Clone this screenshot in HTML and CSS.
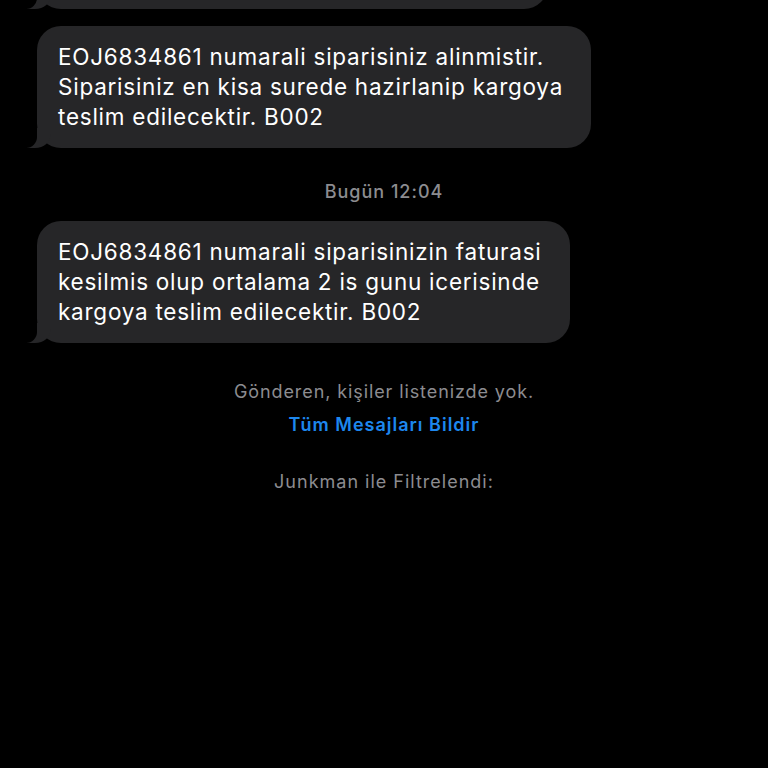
FILE: index.html
```html
<!DOCTYPE html>
<html lang="tr">
<head>
<meta charset="utf-8">
<title>Mesajlar</title>
<link rel="stylesheet" href="styles.css">
</head>
<body>
<main class="thread">
  <div class="bubble bubble-cut"></div>

  <div class="bubble b2">EOJ6834861 numarali siparisiniz alinmistir.<br>Siparisiniz en kisa surede hazirlanip kargoya<br>teslim edilecektir. B002</div>

  <div class="stamp">Bugün 12:04</div>

  <div class="bubble b3">EOJ6834861 numarali siparisinizin faturasi<br>kesilmis olup ortalama 2 is gunu icerisinde<br>kargoya teslim edilecektir. B002</div>

  <div class="footer">
    <div class="note">Gönderen, kişiler listenizde yok.</div>
    <div class="link">Tüm Mesajları Bildir</div>
    <div class="filter">Junkman ile Filtrelendi:</div>
  </div>
</main>
</body>
</html>
```

FILE: styles.css
```css
html, body {
  margin: 0;
  padding: 0;
  background: #000;
  height: 100%;
}

body {
  font-family: Inter, "Noto Sans", "Liberation Sans", sans-serif;
  color: #fff;
  overflow: hidden;
}

.thread {
  display: flex;
  flex-direction: column;
  align-items: flex-start;
  padding-left: 37px;
}

.bubble {
  position: relative;
  background: #262628;
  border-radius: 24px;
  padding: 16px 28px 16px 21px;
  font-size: 22.5px;
  line-height: 30px;
  letter-spacing: 0.75px;
  white-space: nowrap;
}

.bubble::before {
  content: "";
  position: absolute;
  bottom: 0;
  left: -10px;
  width: 24px;
  height: 20px;
  background: #262628;
  border-bottom-right-radius: 16px 14px;
}

.bubble::after {
  content: "";
  position: absolute;
  bottom: 0;
  left: -30px;
  width: 30px;
  height: 22px;
  background: #000;
  border-bottom-right-radius: 11px;
}

.bubble-cut {
  width: 511px;
  height: 60px;
  margin-top: -51px;
  padding: 0;
  border-radius: 0 0 24px 24px;
}

.b2 {
  margin-top: 17px;
}

.stamp {
  align-self: stretch;
  margin-left: -37px;
  text-align: center;
  color: #8c8c90;
  font-size: 18px;
  letter-spacing: 1px;
  font-weight: 500;
  line-height: 20px;
  padding: 34px 0 19px;
}

.footer {
  align-self: stretch;
  margin-left: -37px;
  display: flex;
  flex-direction: column;
  align-items: center;
  padding-top: 38px;
  font-size: 18px;
  letter-spacing: 0.9px;
  line-height: 22px;
}

.note {
  color: #8c8c90;
}

.link {
  color: #1d87ee;
  font-weight: 600;
  margin-top: 11px;
  letter-spacing: 1px;
}

.filter {
  color: #8c8c90;
  margin-top: 35px;
  letter-spacing: 1px;
}
```
